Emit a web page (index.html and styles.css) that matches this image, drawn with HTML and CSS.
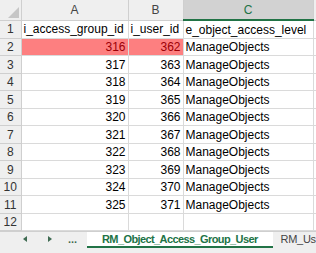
FILE: index.html
```html
<!DOCTYPE html>
<html lang="en">
<head>
  <meta charset="UTF-8">
  <title>RM_Object_Access_Group_User</title>
  <link rel="stylesheet" href="styles.css">
</head>
<body>
  <div class="sheet">
    <table class="grid">
      <colgroup>
        <col class="c-rh"><col class="c-a"><col class="c-b"><col class="c-c"><col class="c-d">
      </colgroup>
      <thead>
        <tr>
          <th class="corner"><span class="tri"></span></th>
          <th>A</th>
          <th>B</th>
          <th class="sel">C</th>
          <th></th>
        </tr>
      </thead>
      <tbody>
        <tr><th>1</th><td>i_access_group_id</td><td>i_user_id</td><td>e_object_access_level</td><td></td></tr>
        <tr><th>2</th><td class="num bad">316</td><td class="num bad">362</td><td>ManageObjects</td><td></td></tr>
        <tr><th>3</th><td class="num">317</td><td class="num">363</td><td>ManageObjects</td><td></td></tr>
        <tr><th>4</th><td class="num">318</td><td class="num">364</td><td>ManageObjects</td><td></td></tr>
        <tr><th>5</th><td class="num">319</td><td class="num">365</td><td>ManageObjects</td><td></td></tr>
        <tr><th>6</th><td class="num">320</td><td class="num">366</td><td>ManageObjects</td><td></td></tr>
        <tr><th>7</th><td class="num">321</td><td class="num">367</td><td>ManageObjects</td><td></td></tr>
        <tr><th>8</th><td class="num">322</td><td class="num">368</td><td>ManageObjects</td><td></td></tr>
        <tr><th>9</th><td class="num">323</td><td class="num">369</td><td>ManageObjects</td><td></td></tr>
        <tr><th>10</th><td class="num">324</td><td class="num">370</td><td>ManageObjects</td><td></td></tr>
        <tr><th>11</th><td class="num">325</td><td class="num">371</td><td>ManageObjects</td><td></td></tr>
        <tr><th>12</th><td></td><td></td><td></td><td></td></tr>
      </tbody>
    </table>

    <!-- sheet tabs -->
    <div class="tabs">
      <span class="nav"><span class="arrow left"></span></span>
      <span class="nav"><span class="arrow right"></span></span>
      <span class="more">...</span>
      <span class="tab active">RM_Object_Access_Group_User</span>
      <span class="tab">RM_Us</span>
    </div>
  </div>
</body>
</html>
```

FILE: styles.css
```css
body {
  margin: 0;
  font-family: "Liberation Sans", Arial, sans-serif;
  background: #fff;
  overflow: hidden;
}
.sheet {
  width: 316px;
  height: 253px;
  overflow: hidden;
}
.grid {
  border-collapse: collapse;
  table-layout: fixed;
  width: 340px;
  font-size: 12px;
  color: #000;
}
.c-rh { width: 21px; }
.c-a { width: 107px; }
.c-b { width: 55px; }
.c-c { width: 130px; }
.c-d { width: 27px; }

.grid th,
.grid td {
  border: 1px solid #dadada;
  padding: 0 2px;
  height: 16px;
  line-height: 16px;
  white-space: nowrap;
  overflow: hidden;
}
.grid tbody tr:nth-child(odd) th,
.grid tbody tr:nth-child(odd) td {
  height: 17px;
}
.grid thead th {
  height: 19px;
  background: #efefef;
  color: #444;
  font-weight: normal;
  border-color: #cfcfcf;
  border-top: none;
}
.grid thead th.sel {
  background: #d2d2d2;
  color: #217346;
  border-bottom: 2px solid #217346;
}
.grid .corner {
  position: relative;
  border-left: none;
}
.tri {
  position: absolute;
  right: 2px;
  bottom: 2px;
  width: 0;
  height: 0;
  border-left: 11px solid transparent;
  border-bottom: 11px solid #c6c6c6;
}
.grid tbody th {
  background: #efefef;
  color: #333;
  font-weight: normal;
  text-align: center;
  border-color: #cfcfcf;
  border-left: none;
  padding: 0;
}
.grid td.num {
  text-align: right;
}
.grid td.bad {
  background: #fd7f80;
  color: #9c0006;
}

.tabs {
  display: flex;
  align-items: flex-start;
  height: 24px;
  background: #efefef;
  border-top: 1px solid #cfcfcf;
  font-size: 11px;
  color: #444;
}
.tabs > span {
  flex-shrink: 0;
}
.nav {
  width: 25px;
  height: 14px;
  display: flex;
  align-items: center;
  justify-content: center;
}
.nav:first-child {
  margin-left: 12px;
}
.arrow {
  width: 0;
  height: 0;
  border-top: 3px solid transparent;
  border-bottom: 3px solid transparent;
}
.arrow.left {
  border-right: 4px solid #3f6b52;
}
.arrow.right {
  border-left: 4px solid #3f6b52;
}
.more {
  width: 25px;
  margin-left: -2px;
  text-align: center;
  line-height: 14px;
  font-weight: bold;
  color: #3f6b52;
}
.tab {
  height: 14px;
  line-height: 14px;
  padding: 0 0 0 8px;
  letter-spacing: -0.3px;
  white-space: nowrap;
}
.tab.active {
  margin-left: 2px;
  background: #fff;
  color: #217346;
  font-weight: bold;
  letter-spacing: -0.6px;
  border-bottom: 2px solid #217346;
  padding: 0 15px;
}
```
